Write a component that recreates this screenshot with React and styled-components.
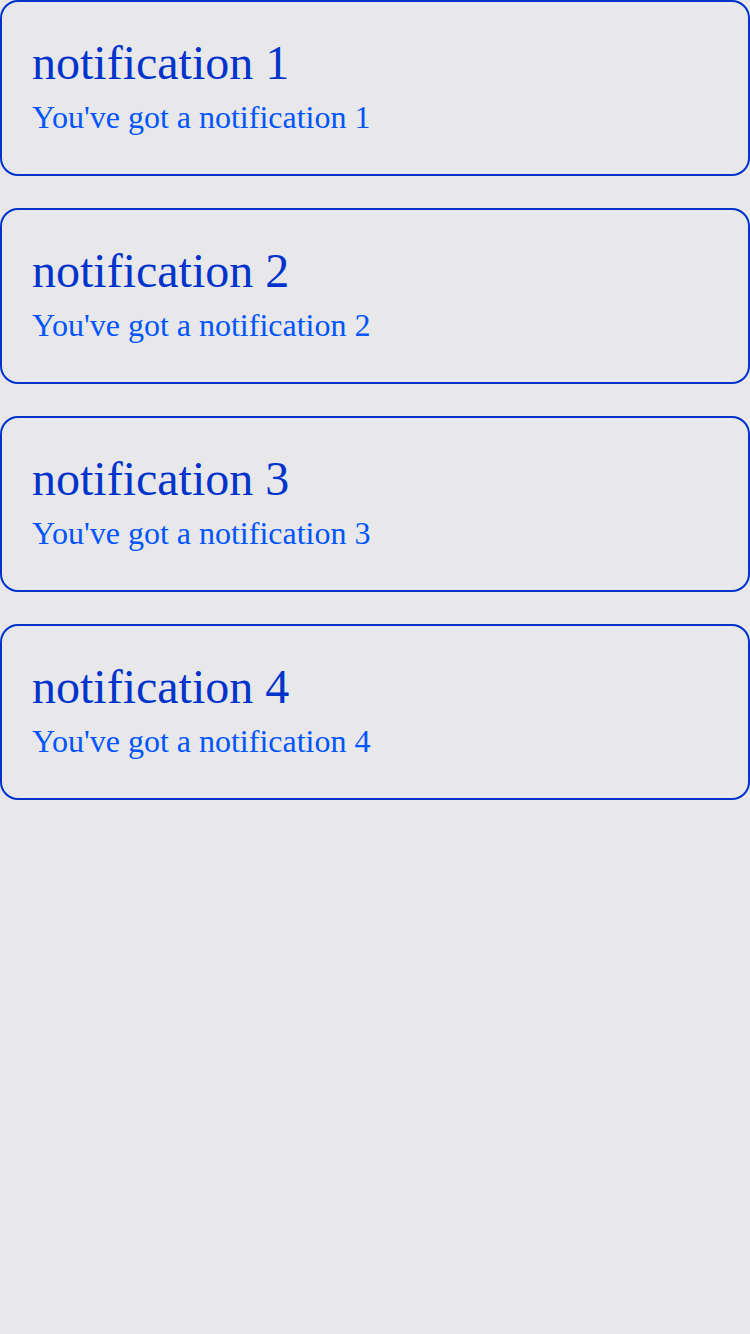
import styled, { createGlobalStyle } from "styled-components";

const GlobalStyle = createGlobalStyle`
  html, body {
    margin: 0;
    padding: 0;
    background: #e8e7ea;
  }
  body {
    min-height: 1334px;
    font-family: "Liberation Serif", "Times New Roman", serif;
  }
`;

const List = styled.div`
  display: flex;
  flex-direction: column;
  gap: 32px;
`;

const Card = styled.div`
  box-sizing: border-box;
  width: 750px;
  height: 176px;
  padding: 34px 30px 0;
  border: 2px solid #0033cc;
  border-radius: 18px;
`;

const Title = styled.h2`
  margin: 0;
  font-size: 48px;
  font-weight: 400;
  line-height: 53px;
  color: #0033cc;
`;

const Message = styled.p`
  margin: 10px 0 0;
  font-size: 32px;
  line-height: 36px;
  color: #0055ff;
`;

const notifications = [1, 2, 3, 4];

const App = () => {
  return (
    <>
      <GlobalStyle />
      <List>
        {notifications.map((n) => (
          <Card key={n}>
            <Title>notification {n}</Title>
            <Message>You've got a notification {n}</Message>
          </Card>
        ))}
      </List>
    </>
  );
};

export default App;
